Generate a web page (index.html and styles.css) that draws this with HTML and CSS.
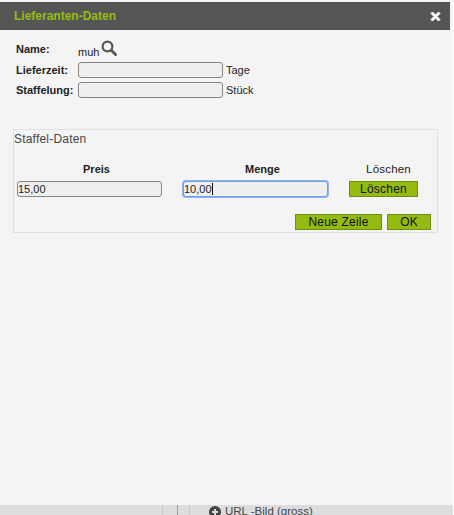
FILE: index.html
```html
<!DOCTYPE html>
<html lang="de">
<head>
    <meta charset="UTF-8">
    <title>Lieferanten-Daten</title>
    <link rel="stylesheet" href="styles.css">
</head>
<body>
    <div class="dialog">
        <div class="dialog-head">
            <div class="dialog-title">Lieferanten-Daten</div>
            <svg class="close-icon" width="11" height="11" viewBox="0 0 11 11"><path d="M2.5 1 L5.5 4 L8.5 1 L10 2.5 L7 5.5 L10 8.5 L8.5 10 L5.5 7 L2.5 10 L1 8.5 L4 5.5 L1 2.5 Z" fill="#fff" stroke="#fff" stroke-width="1" stroke-linejoin="round"/></svg>
        </div>
        <div class="dialog-body">
            <div class="form-row name-row">
                <label class="form-label">Name:</label>
                <span class="name-value">muh</span>
                <svg class="search-icon" width="16" height="16" viewBox="0 0 16 16"><circle cx="6.5" cy="6.5" r="4.9" fill="none" stroke="#555" stroke-width="2.2"/><path d="M10.2 10.2 L14.6 14.6" stroke="#555" stroke-width="2.8" stroke-linecap="round"/></svg>
            </div>
            <div class="form-row">
                <label class="form-label">Lieferzeit:</label>
                <input class="field" type="text">
                <span class="unit">Tage</span>
            </div>
            <div class="form-row">
                <label class="form-label">Staffelung:</label>
                <input class="field" type="text">
                <span class="unit">Stück</span>
            </div>
            <div class="staffel-box">
                <div class="box-title">Staffel-Daten</div>
                <div class="staffel-grid">
                    <div class="col-head">Preis</div>
                    <div class="col-head">Menge</div>
                    <div class="col-head col-delete">Löschen</div>
                    <input class="field" type="text" value="15,00">
                    <div class="field focused">10,00<span class="caret"></span></div>
                    <button class="btn delete-btn" type="button">Löschen</button>
                </div>
                <div class="box-actions">
                    <button class="btn new-btn" type="button">Neue Zeile</button>
                    <button class="btn ok-btn" type="button">OK</button>
                </div>
            </div>
        </div>
    </div>
    <div class="page-below">
        <div class="cell cell-a"></div>
        <div class="cell cell-b"></div>
        <div class="cell cell-c"></div>
        <div class="cell cell-d">
            <svg width="12" height="12" viewBox="0 0 12 12"><circle cx="6" cy="6" r="6" fill="#444"/><path d="M6 3 V9 M3 6 H9" stroke="#ddd" stroke-width="2"/></svg>
            <span>URL -Bild (gross)</span>
        </div>
    </div>
</body>
</html>
```

FILE: styles.css
```css
html, body {
    height: 100%;
}
body {
    margin: 0;
    width: 454px;
    height: 515px;
    overflow: hidden;
    background-color: #fff;
    font-family: "Liberation Sans", Arial, sans-serif;
    font-size: 11px;
    color: #222;
    display: flex;
    flex-direction: column;
}
.dialog {
    box-sizing: border-box;
    padding-top: 2px;
    width: 453px;
    height: 505px;
    background-color: #f4f4f4;
    flex-shrink: 0;
}
.dialog-head {
    width: 450px;
    box-sizing: border-box;
    height: 28px;
    background-color: #555;
    display: flex;
    align-items: center;
    justify-content: space-between;
    padding: 0 9px 0 14px;
}
.dialog-title {
    color: #95bb13;
    font-size: 12px;
    font-weight: bold;
}
.close-icon {
    margin-top: 1px;
}
.dialog-body {
    width: 450px;
    box-sizing: border-box;
    padding: 9px 12px 0 13px;
}
.form-row {
    display: flex;
    align-items: center;
    height: 20px;
    padding-left: 3px;
}
.name-row {
    height: 21px;
}
.name-row .form-label {
    margin-bottom: 1px;
}
.form-label {
    width: 62px;
    flex-shrink: 0;
    font-size: 11px;
    font-weight: bold;
}
.name-value {
    margin-top: 4px;
}
.search-icon {
    margin: 0 0 3px 2px;
}
.field {
    box-sizing: border-box;
    width: 145px;
    height: 16px;
    padding: 0;
    border: 1px solid #858585;
    border-radius: 3px;
    background-color: #efefef;
    font-family: inherit;
    font-size: 11px;
    color: #222;
    line-height: 14px;
}
.unit {
    margin-left: 3px;
    font-size: 11px;
}
.staffel-box {
    margin-top: 29px;
    box-sizing: border-box;
    height: 104px;
    border: 1px solid #e0e0e0;
}
.box-title {
    font-size: 12px;
    letter-spacing: 0.2px;
    line-height: 14px;
    margin-top: 2px;
    color: #444;
}
.staffel-grid {
    display: grid;
    grid-template-columns: 145px 145px 69px;
    column-gap: 21px;
    row-gap: 5px;
    padding: 17px 0 0 3px;
}
.col-head {
    font-weight: bold;
    font-size: 11px;
    line-height: 13px;
    text-align: center;
    padding-left: 14px;
}
.col-delete {
    font-weight: normal;
    font-size: 11.5px;
    letter-spacing: 0.2px;
    padding-left: 10px;
    white-space: nowrap;
}
.focused {
    border: 1px solid #6f9ee8;
    box-shadow: 0 0 0 1px #8fb4ee;
    display: flex;
    align-items: center;
}
.caret {
    width: 1px;
    height: 12px;
    background-color: #000;
}
.btn {
    box-sizing: border-box;
    height: 16px;
    padding: 0;
    border: 1px solid #6f8f10;
    background-color: #95bb13;
    font-family: inherit;
    font-size: 12px;
    letter-spacing: 0.2px;
    color: #111;
    line-height: 14px;
}
.box-actions {
    display: flex;
    justify-content: flex-end;
    gap: 5px;
    margin-top: 17px;
    padding-right: 6px;
}
.new-btn {
    width: 87px;
}
.ok-btn {
    width: 44px;
}
.page-below {
    width: 453px;
    flex: 1;
    background-color: #ddd;
    display: flex;
    overflow: hidden;
}
.cell {
    height: 10px;
}
.cell-a {
    width: 162px;
    border-right: 1px solid #c8c8c8;
}
.cell-b {
    width: 14px;
    border-right: 1px solid #999;
}
.cell-c {
    width: 11px;
    border-right: 1px solid #c8c8c8;
}
.cell-d {
    flex: 1;
    display: flex;
    gap: 4px;
    padding-left: 19px;
    font-size: 11.5px;
    line-height: 13px;
    color: #444;
    white-space: nowrap;
}
.cell-d svg {
    margin-top: 1px;
    flex-shrink: 0;
}
```
